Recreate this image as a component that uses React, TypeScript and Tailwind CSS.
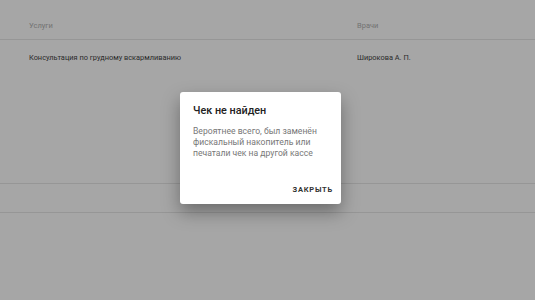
import React from "react";

const ROWS = [{ service: "Консультация по грудному вскармливанию", doctor: "Широкова А. П." }];

export default function App() {
  return (
    <div className="relative h-[300px] w-[535px] overflow-hidden bg-white font-['Roboto',sans-serif]">
      <div className="flex h-[40px] items-end border-b border-[#e6e6e6] pb-[8px] text-[7.5px] text-[#b0b0b0]">
        <div className="w-[357px] pl-[29px]">Услуги</div>
        <div>Врачи</div>
      </div>
      {ROWS.map((row) => (
        <div key={row.service} className="flex h-[143px] items-start pt-[12px] text-[7.4px] text-[#444]">
          <div className="w-[357px] pl-[29px]">{row.service}</div>
          <div>{row.doctor}</div>
        </div>
      ))}
      <div className="h-[30px] border-y border-[#e6e6e6]" />

      <div className="absolute inset-0 flex items-center justify-center bg-black/35 pr-[14px] pb-[4px]">
        <div className="flex h-[112px] w-[161px] flex-col rounded-[3px] bg-white px-[13px] pt-[12px] pb-[9px] shadow-[0_8px_18px_rgba(0,0,0,0.35)]">
          <h2 className="text-[10.8px] leading-[14px] font-medium text-[#222]">Чек не найден</h2>
          <p className="mt-[8px] text-[8.6px] leading-[11px] text-[#777]">
            Вероятнее всего, был заменён фискальный накопитель или печатали чек на другой кассе
          </p>
          <div className="mt-auto flex justify-end">
            <button type="button" className="mr-[-5px] text-[7.5px] font-bold tracking-[0.1em] text-[#333]">
              ЗАКРЫТЬ
            </button>
          </div>
        </div>
      </div>
    </div>
  );
}
